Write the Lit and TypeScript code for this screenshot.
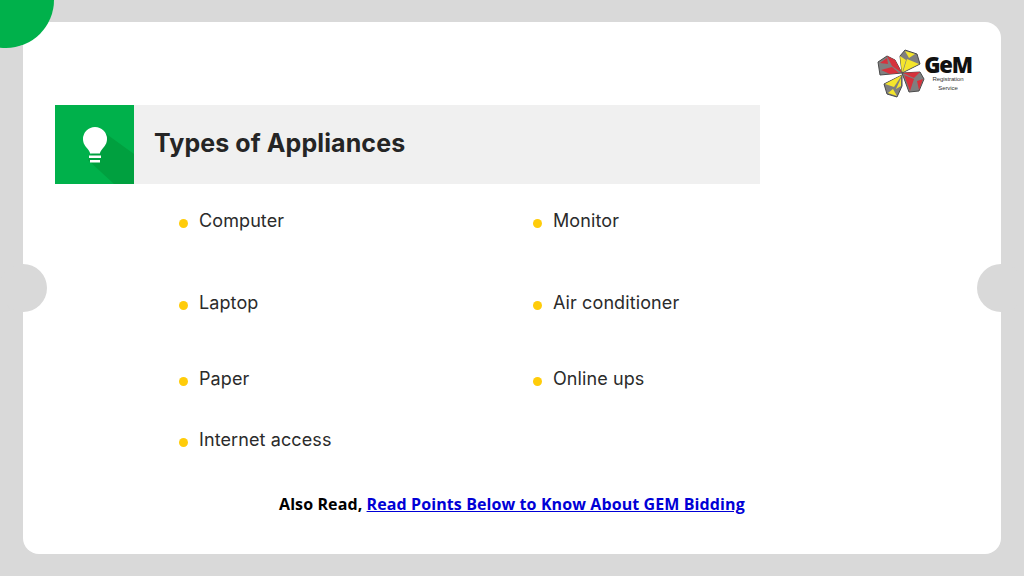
import { LitElement, html, css, svg } from "lit";
import { customElement } from "lit/decorators.js";

const GREY = "#7f7f7f";
const RED = "#d6323c";
const YEL = "#f4e52c";
const EDGE = "#4a4a4a";

@customElement("app-root")
export class AppRoot extends LitElement {
  static styles = css`
    :host { display: block; width: 1024px; height: 576px; overflow: hidden; }
    .page { position: relative; width: 1024px; height: 576px; box-sizing: border-box; padding: 22px 23px; background: #d9d9d9; overflow: hidden; }
    .blob { position: absolute; left: -42px; top: -48px; width: 96px; height: 96px; border-radius: 50%; background: #00b14b; }
    .notch { position: absolute; top: 264px; width: 48px; height: 48px; border-radius: 50%; background: #d9d9d9; }
    .notch.l { left: -1px; }
    .notch.r { right: -1px; }
    .card { box-sizing: border-box; height: 532px; background: #fff; border-radius: 16px; padding: 26px 0 0 32px; display: flex; flex-direction: column; }
    .logo-row { height: 57px; display: flex; justify-content: flex-end; align-items: flex-start; padding-right: 30px; }
    .logo { display: flex; align-items: flex-start; }
    .logo svg { display: block; }
    .brand { width: 46px; margin-left: -2px; display: flex; flex-direction: column; align-items: center; font-family: "Liberation Sans", sans-serif; color: #333; }
    .gem { font-family: "Open Sans", sans-serif; font-size: 22px; font-weight: 800; line-height: 22px; color: #111; margin-top: 5px; letter-spacing: -1.2px; }
    .sub { font-size: 6px; line-height: 9px; text-align: center; letter-spacing: -0.1px; }
    .header { width: 705px; height: 79px; display: flex; align-items: center; background: #f0f0f0; }
    .tile { width: 79px; height: 79px; flex: none; background: #00b14b; }
    .tile svg { display: block; }
    h1 { margin: 0 0 4px 20px; font-family: Inter, sans-serif; font-size: 25px; line-height: 32px; font-weight: 700; letter-spacing: 0.1px; color: #252525; }
    .list { display: grid; grid-template-columns: 354px 300px; grid-template-rows: 82px 76px 61px 40px; margin: 24px 0 0 123px; padding: 0; list-style: none; }
    .list li { display: flex; align-items: flex-start; height: 26px; font-family: Inter, sans-serif; font-size: 18px; line-height: 26px; color: #2b2b2b; letter-spacing: 0.1px; }
    .dot { width: 9px; height: 9px; margin: 11px 11.500px 0 0.500px; border-radius: 50%; background: #ffcc0a; flex: none; }
    .also { margin: 25px 0 0 224px; font-family: "Open Sans", sans-serif; font-size: 16px; line-height: 24px; font-weight: 700; letter-spacing: 0.1px; color: #000; white-space: nowrap; }
    .also a { color: #0000d6; text-decoration: underline; }
  `;

  render() {
    const items = [
      "Computer", "Monitor",
      "Laptop", "Air conditioner",
      "Paper", "Online ups",
      "Internet access",
    ];
    return html`
      <div class="page">
        <div class="card">
          <div class="logo-row">
            <div class="logo">
              <svg width="50" height="50" viewBox="-25 -25 50 50" aria-hidden="true">
                ${svg`
                <polygon points="-24,-11 -15,-17 -7,-13 0,0 -22,2" fill="${GREY}" stroke="${EDGE}" stroke-width="1"/>
                <polygon points="-15,-17 -7,-13 0,0 -10,-7" fill="${RED}"/>
                <polygon points="-21,-3 -10,-6 -3,0 -12,1" fill="${RED}"/>
                <polygon points="-22,-10 -15,-15 -14,-9" fill="${RED}"/>
                <polygon points="-2,-17 3,-23 15,-19 18,-9 0,0" fill="${GREY}" stroke="${EDGE}" stroke-width="1"/>
                <polygon points="-2,-17 4,-13 0,0" fill="${YEL}"/>
                <polygon points="3,-22 13,-19 7,-15" fill="${YEL}"/>
                <polygon points="5,-14 17,-9 1,-1" fill="${YEL}"/>
                <polygon points="0,0 18,-1 22,6 17,18 7,19" fill="${GREY}" stroke="${EDGE}" stroke-width="1"/>
                <polygon points="1,0 18,-1 12,5" fill="${RED}"/>
                <polygon points="2,2 12,6 8,18" fill="${RED}"/>
                <polygon points="15,8 21,6 17,17" fill="${RED}"/>
                <polygon points="0,2 -18,11 -15,21 -5,24 0,13" fill="${GREY}" stroke="${EDGE}" stroke-width="1"/>
                <polygon points="0,2 -17,11 -8,14" fill="${YEL}"/>
                <polygon points="-1,5 -6,16 -1,13" fill="${YEL}"/>
                <polygon points="-14,20 -9,16 -5,23" fill="${YEL}"/>
                `}
              </svg>
              <div class="brand">
                <span class="gem">GeM</span>
                <span class="sub">Registration<br />Service</span>
              </div>
            </div>
          </div>
          <div class="header">
            <div class="tile">
              <svg width="79" height="79" viewBox="0 0 79 79" aria-hidden="true">
                <polygon points="50,28 79,49 79,79 59,79 33,55" fill="#00a03f"/>
                <path d="M40 22a12 12 0 0 0-12 12c0 4.500 2.300 7.200 4.500 9.800 1.500 1.800 2.300 3.200 2.600 4.700h9.800c.3-1.500 1.100-2.900 2.600-4.700 2.200-2.600 4.500-5.300 4.500-9.800a12 12 0 0 0-12-12z" fill="#fff"/>
                <rect x="34" y="50.500" width="12" height="2.500" fill="#fff"/>
                <rect x="35" y="55" width="10" height="2.500" fill="#fff"/>
              </svg>
            </div>
            <h1>Types of Appliances</h1>
          </div>
          <ul class="list">
            ${items.map((t) => html`<li><span class="dot"></span>${t}</li>`)}
          </ul>
          <div class="also">Also Read, <a href="#">Read Points Below to Know About GEM Bidding</a></div>
        </div>
        <div class="blob"></div>
        <div class="notch l"></div>
        <div class="notch r"></div>
      </div>
    `;
  }
}
